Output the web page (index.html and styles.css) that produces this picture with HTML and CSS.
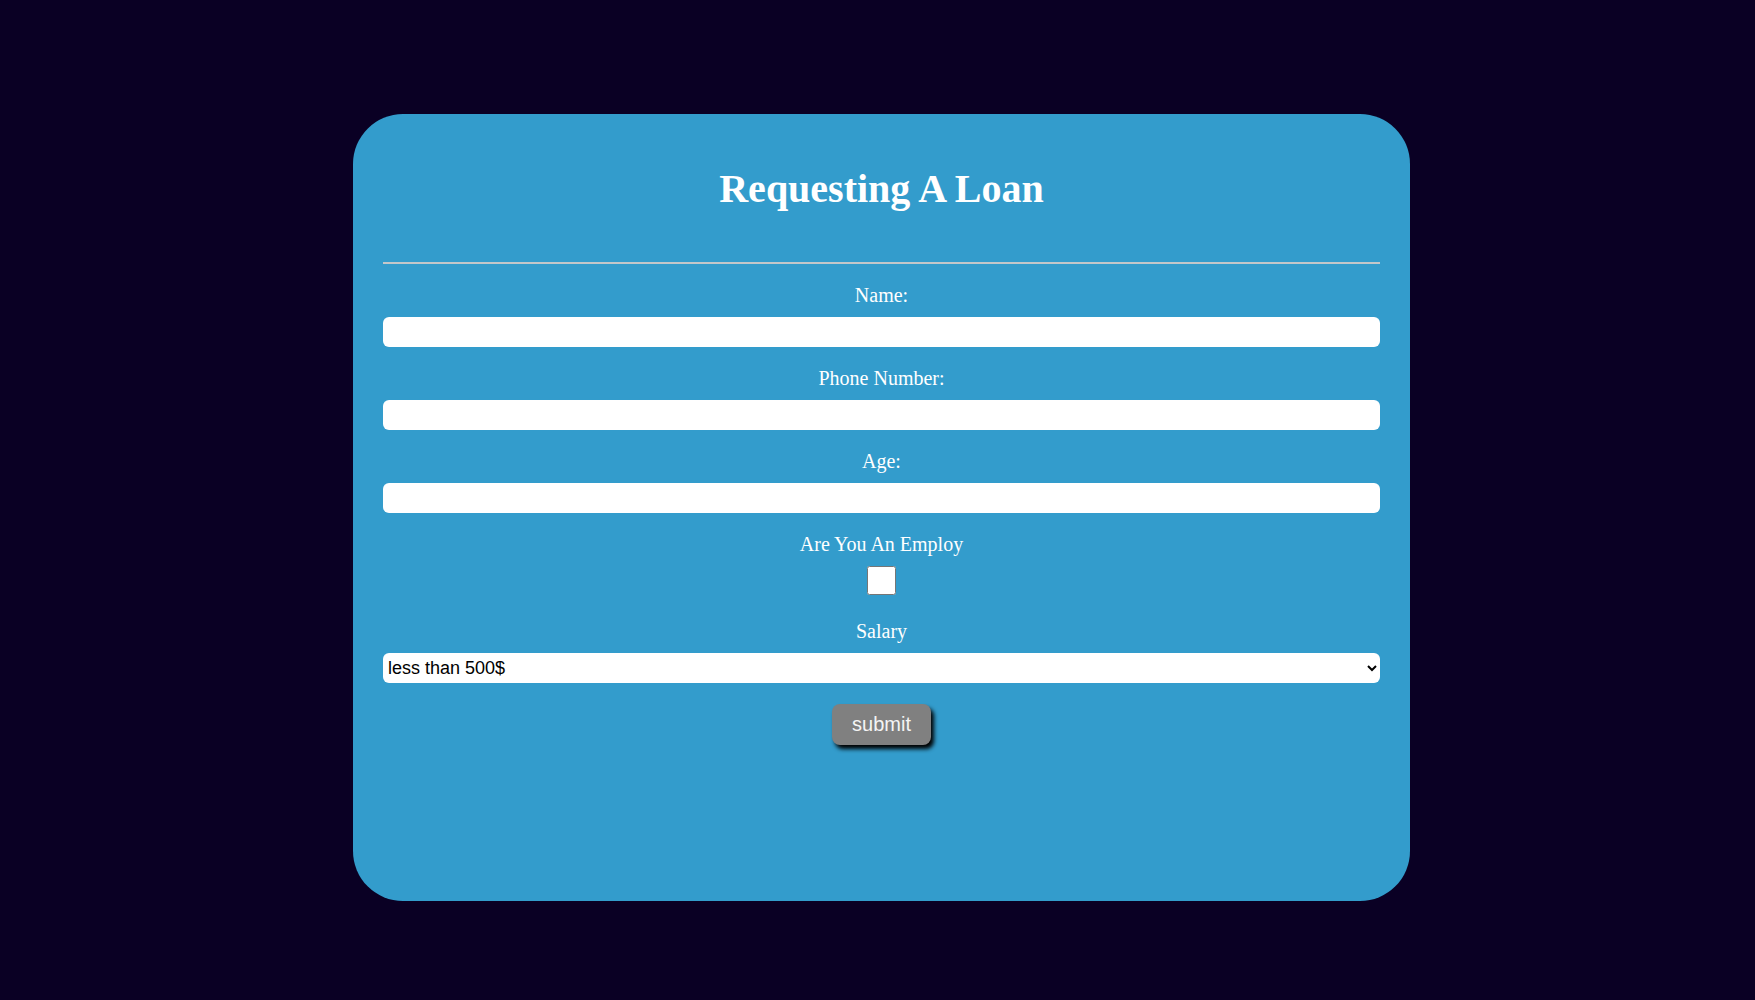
FILE: index.html
```html
<!DOCTYPE html>
<html lang="en">
<head>
<meta charset="utf-8">
<title>Requesting A Loan</title>
<link rel="stylesheet" href="styles.css">
</head>
<body>
<main class="card">
  <h1 class="title">Requesting A Loan</h1>
  <hr class="divider">
  <form class="form">
    <label class="label" for="name">Name:</label>
    <input class="field" id="name" type="text">
    <label class="label" for="phone">Phone Number:</label>
    <input class="field" id="phone" type="text">
    <label class="label" for="age">Age:</label>
    <input class="field" id="age" type="text">
    <label class="label" for="employ">Are You An Employ</label>
    <input class="check" id="employ" type="checkbox">
    <label class="label" for="salary">Salary</label>
    <select class="select" id="salary">
      <option>less than 500$</option>
      <option>500$ - 1000$</option>
      <option>more than 1000$</option>
    </select>
    <button class="submit" type="button">submit</button>
  </form>
</main>
</body>
</html>
```
FILE: styles.css
```css
html, body {
  margin: 0;
  padding: 0;
}
body {
  background: #0a0024;
  min-height: 1000px;
  padding-top: 114px;
  box-sizing: border-box;
  font-family: "Liberation Serif", "Times New Roman", serif;
}
.card {
  width: 1057px;
  height: 787px;
  margin-left: 353px;
  box-sizing: border-box;
  background: #339ccc;
  border-radius: 50px;
  padding: 52px 30px 0 30px;
}
.title {
  margin: 0;
  text-align: center;
  color: #ffffff;
  font-size: 40px;
  line-height: 46px;
  font-weight: bold;
}
.divider {
  margin: 50px 0 0 0;
  border: none;
  height: 2px;
  background: #c3c7ca;
}
.form {
  display: flex;
  flex-direction: column;
  align-items: center;
  padding-top: 20px;
}
.label {
  color: #ffffff;
  font-size: 20px;
  line-height: 23px;
  height: 23px;
  margin-bottom: 10px;
}
.field {
  display: block;
  width: 100%;
  height: 30px;
  box-sizing: border-box;
  border: none;
  border-radius: 6px;
  background: #ffffff;
  margin: 0 0 20px 0;
  font-size: 16px;
  font-family: "Liberation Sans", Arial, sans-serif;
}
.check {
  width: 29px;
  height: 29px;
  margin: 0 0 25px 0;
}
.select {
  display: block;
  width: 100%;
  height: 30px;
  box-sizing: border-box;
  border: none;
  border-radius: 6px;
  background: #ffffff;
  color: #000000;
  font-family: "Liberation Sans", Arial, sans-serif;
  font-size: 18px;
  padding: 0 0 0 1px;
  margin: 0 0 21px 0;
}
.submit {
  width: 99px;
  height: 41px;
  border: none;
  border-radius: 8px;
  background: #808080;
  color: #f4f4f4;
  font-family: "Liberation Sans", Arial, sans-serif;
  font-size: 20px;
  box-shadow: 3px 4px 4px #000000;
  padding: 0;
  cursor: pointer;
}
```
